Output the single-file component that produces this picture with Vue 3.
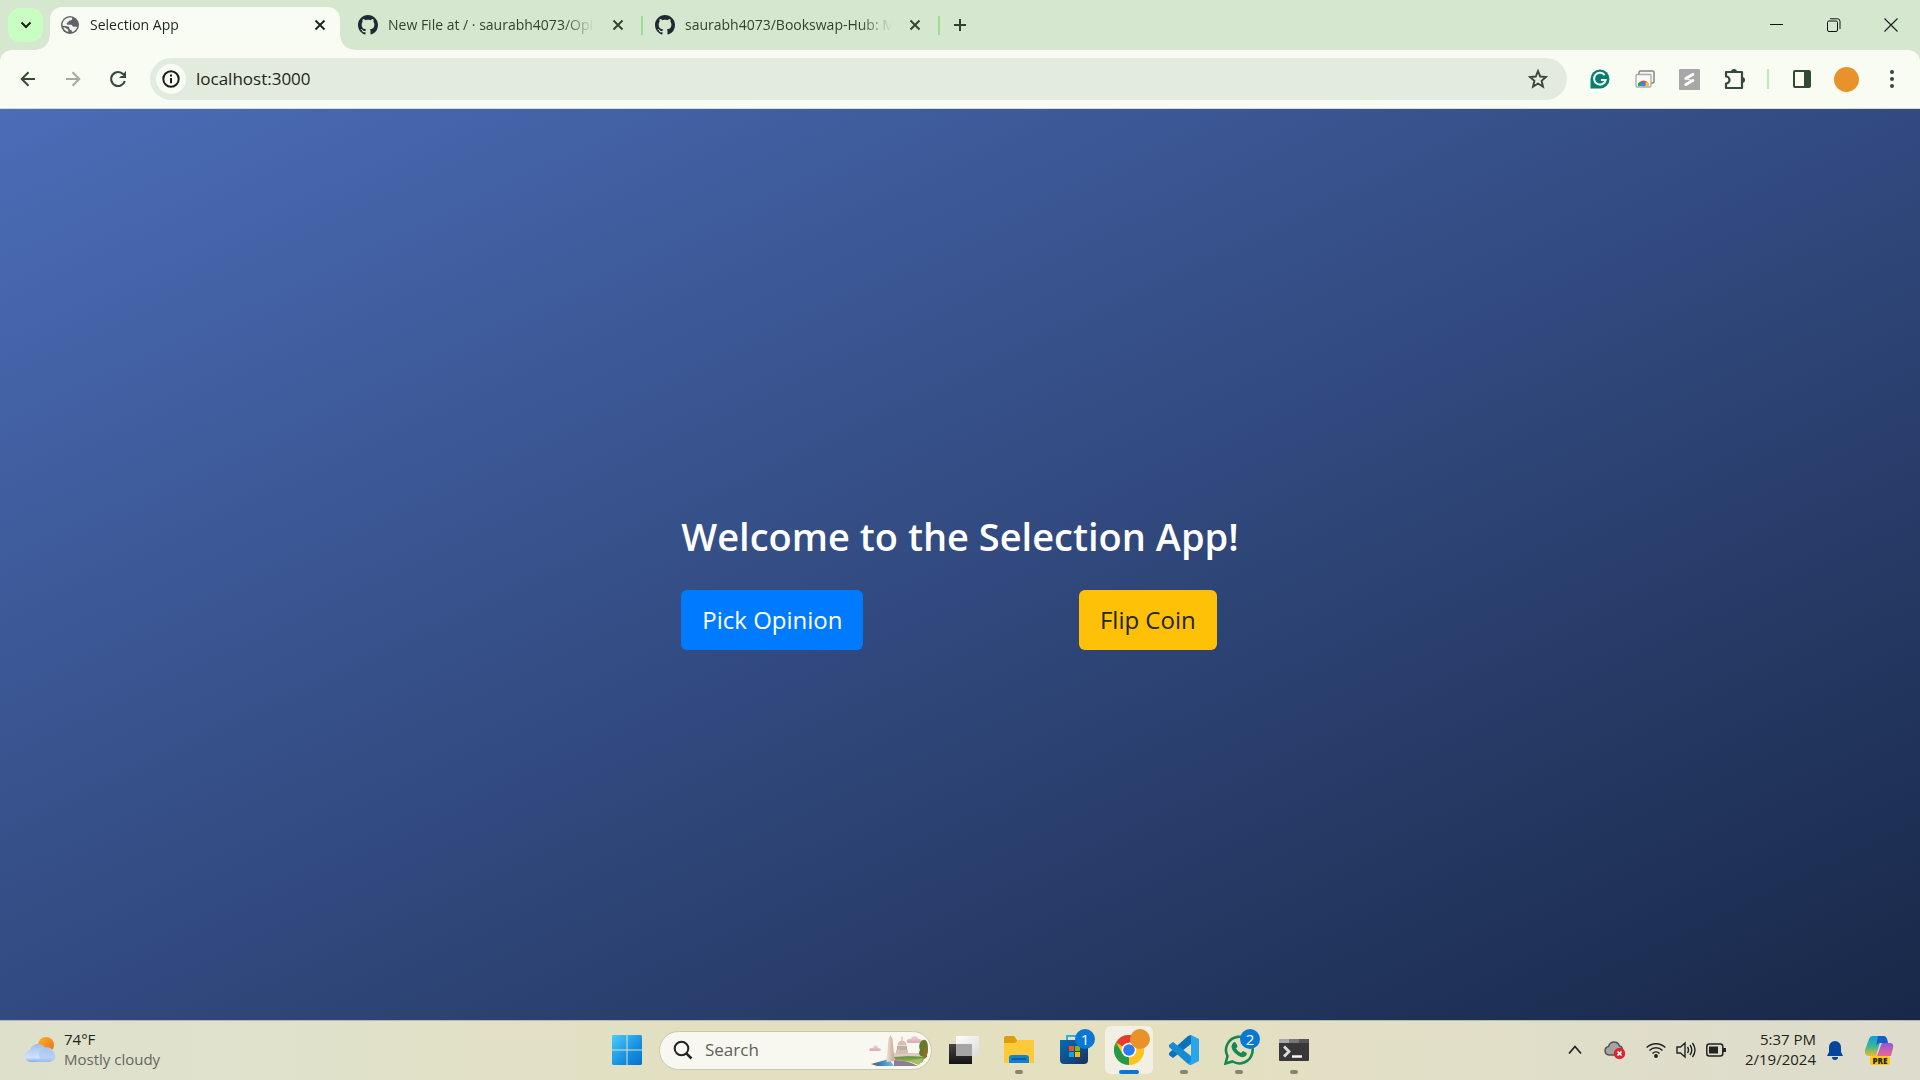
<script setup>
const tabs = [
  { title: 'Selection App', icon: 'globe', active: true },
  { title: 'New File at / · saurabh4073/Opi', icon: 'github', active: false },
  { title: 'saurabh4073/Bookswap-Hub: M', icon: 'github', active: false },
]
</script>

<template>
  <div class="screen">
    <header class="browser">
      <div class="strip">
        <button class="tab-search" aria-label="Search tabs">
          <svg width="12" height="12" viewBox="0 0 12 12"><path d="M1.500 3.500L6 8l4.500-4.500" fill="none" stroke="#14210f" stroke-width="2" /></svg>
        </button>
        <div v-for="tab in tabs" :key="tab.title" class="tab" :class="{ active: tab.active }">
          <svg v-if="tab.icon === 'globe'" class="favicon" viewBox="0 0 20 20">
            <circle cx="10" cy="10" r="9" fill="#5f6368" />
            <path d="M8 2.800c1.500-.5 3-.5 4.300-.1-.3 1.300-.2 2.300-1.300 2.600-1 .2-2.200.2-2.400 1.300-.2 1.200-1.600.9-1.900 1.900-.2 1 .8 1.200 1.800 1.200h2.600c1.200.1 1.200 1.500 2 1.900.9.300 2.500-.1 4.200.2-.7 2.500-2.500 4.500-4.900 5.300-.9-.4-.5-1.600-1.100-2.200-.6-.5-1.800-.2-1.900-1.300-.1-1-.3-2-1.400-2.200-1.500-.3-3.700-.1-5.500-.7C2.100 7 4.500 3.900 8 2.800zM3.200 12.500c1.300-.3 2.600.2 3.300 1 .6.800 1.700.9 1.800 1.900v1.500c-2.400-.5-4.300-2.200-5.100-4.400z" fill="#f1f4ed" />
          </svg>
          <svg v-else class="favicon" viewBox="0 0 16 16"><path fill="#1f2933" d="M8 0C3.580 0 0 3.580 0 8c0 3.540 2.290 6.530 5.470 7.590.4.070.55-.17.55-.38 0-.19-.01-.82-.01-1.490-2.010.37-2.530-.49-2.690-.94-.09-.23-.48-.94-.82-1.130-.28-.15-.68-.52-.01-.53.63-.01 1.080.58 1.230.82.72 1.210 1.870.87 2.330.66.07-.52.28-.87.51-1.070-1.780-.2-3.640-.89-3.640-3.950 0-.87.31-1.590.82-2.150-.08-.2-.36-1.020.08-2.120 0 0 .67-.21 2.200.82.64-.18 1.320-.27 2-.27s1.360.09 2 .27c1.530-1.040 2.200-.82 2.200-.82.44 1.100.16 1.920.08 2.120.51.56.82 1.270.82 2.150 0 3.070-1.870 3.750-3.650 3.950.29.25.54.73.54 1.480 0 1.070-.01 1.930-.01 2.200 0 .21.15.46.55.38A8.010 8.010 0 0 0 16 8c0-4.420-3.580-8-8-8z" /></svg>
          <span class="tab-title">{{ tab.title }}</span>
          <button class="tab-close" aria-label="Close tab">
            <svg width="12" height="12" viewBox="0 0 12 12"><path d="M1.500 1.500l9 9M10.500 1.500l-9 9" stroke="currentColor" stroke-width="1.900" /></svg>
          </button>
        </div>
        <button class="new-tab" aria-label="New tab">
          <svg width="14" height="14" viewBox="0 0 14 14"><path d="M7 1v12M1 7h12" stroke="#2f4128" stroke-width="2" /></svg>
        </button>
        <div class="window-controls">
          <button aria-label="Minimize"><svg width="14" height="14" viewBox="0 0 14 14"><path d="M0 6.500h13" stroke="#111" /></svg></button>
          <button aria-label="Restore"><svg width="14" height="14" viewBox="0 0 14 14" fill="none" stroke="#111"><rect x=".5" y="3" width="10" height="10.500" rx="1.500" /><path d="M3 .8h7.500a2.500 2.500 0 0 1 2.500 2.500V11" /></svg></button>
          <button aria-label="Close"><svg width="14" height="14" viewBox="0 0 14 14"><path d="M.5.5l13 13M13.500.5l-13 13" stroke="#222" stroke-width="1.200" /></svg></button>
        </div>
      </div>

      <div class="toolbar">
        <nav class="history">
          <button aria-label="Back"><svg width="16" height="16" viewBox="0 0 16 16"><path d="M15 8H2M8.500 1.200L1.700 8l6.800 6.800" fill="none" stroke="#364a31" stroke-width="2" /></svg></button>
          <button aria-label="Forward"><svg width="16" height="16" viewBox="0 0 16 16"><path d="M1 8h13M7.500 1.200L14.300 8l-6.800 6.800" fill="none" stroke="#a3aa9f" stroke-width="2" /></svg></button>
          <button aria-label="Reload"><svg width="18" height="18" viewBox="0 0 18 18"><path d="M15.800 11A7 7 0 1 1 14.300 4.300L16 6" fill="none" stroke="#364a31" stroke-width="2.200" /><path d="M17 1v7h-7l2-2h3V3z" fill="#364a31" /></svg></button>
        </nav>
        <div class="omnibox">
          <button class="site-info" aria-label="View site information">
            <svg width="18" height="18" viewBox="0 0 18 18"><circle cx="9" cy="9" r="7.700" fill="none" stroke="#1a1d18" stroke-width="2" /><path d="M9 8v5.200M9 4.600v2" stroke="#1a1d18" stroke-width="2" /></svg>
          </button>
          <input class="address" type="text" value="localhost:3000" aria-label="Address" />
          <button class="star" aria-label="Bookmark this tab">
            <svg width="20" height="20" viewBox="0 0 20 20"><path d="M10 2l2.200 5.500 5.800.5-4.400 3.800 1.400 5.800-5-3.100-5 3.100 1.400-5.800L2 8l5.800-.5z" fill="none" stroke="#3d463a" stroke-width="1.900" /></svg>
          </button>
        </div>
        <div class="extensions">
          <button aria-label="Grammarly"><svg width="20" height="20" viewBox="0 0 20 20"><path d="M.5 19.500V10a9.500 9.500 0 1 1 9.500 9.500z" fill="#087f6d" /><path d="M14.700 6.200A5.900 5.900 0 1 0 15.700 11H11" fill="none" stroke="#fff" stroke-width="2" /></svg></button>
          <button aria-label="Web Store"><svg width="20" height="20" viewBox="0 0 20 20"><rect x="4" y="2" width="15" height="12" rx="1.500" fill="#f6f7f3" stroke="#858585" stroke-width="1.500" /><rect x="1" y="5.500" width="15" height="12.500" rx="1" fill="#fafafa" stroke="#aaa" stroke-width="1.300" /><path d="M3 17a5.500 5.500 0 0 1 11 0z" fill="#df4a3c" /><path d="M3 17v-3l3-1 2.500 4z" fill="#22a45d" /><path d="M14 17v-3l-3-1-2.500 4z" fill="#fbc51b" /><circle cx="8.500" cy="15.200" r="2.300" fill="#3c82ee" /></svg></button>
          <button aria-label="Scribe"><svg width="21" height="21" viewBox="0 0 21 21"><rect width="21" height="21" rx="1" fill="#a7a7a7" /><path d="M6.800 9.500l7-4M6.800 15.500l7-4" stroke="#fff" stroke-width="3" stroke-linecap="round" /><path d="M7 9.500l7 2.500" stroke="#fff" stroke-width="1" /></svg></button>
          <button aria-label="Extensions"><svg width="23" height="23" viewBox="0 0 23 23"><path d="M3 4h16v16H3v-4.500a3.500 3.500 0 0 0 0-7z" fill="none" stroke="#364a31" stroke-width="2.200" stroke-linejoin="round" /><path d="M8 4a3 3 0 0 1 6 0zM19 9a3 3 0 0 1 0 6z" fill="#364a31" /></svg></button>
          <i class="divider"></i>
          <button aria-label="Side panel"><svg width="18" height="18" viewBox="0 0 18 18"><rect x="1" y="1" width="16" height="16" rx="1" fill="none" stroke="#364a31" stroke-width="2" /><path d="M11 1h6v16h-6z" fill="#364a31" /></svg></button>
          <button aria-label="Profile"><span class="avatar"></span></button>
          <button aria-label="Menu"><svg width="4" height="18" viewBox="0 0 4 18" fill="#364a31"><circle cx="2" cy="2" r="2" /><circle cx="2" cy="9" r="2" /><circle cx="2" cy="16" r="2" /></svg></button>
        </div>
      </div>
    </header>

    <main class="page">
      <div class="welcome">
        <h1>Welcome to the Selection App!</h1>
        <div class="choices">
          <button class="btn primary">Pick Opinion</button>
          <button class="btn warning">Flip Coin</button>
        </div>
      </div>
    </main>

    <footer class="taskbar">
      <button class="weather">
        <svg width="32" height="28" viewBox="0 0 32 28">
          <defs>
            <linearGradient id="sun" x1="0" y1="0" x2="1" y2="1"><stop offset="0" stop-color="#f4b62a" /><stop offset="1" stop-color="#f26a10" /></linearGradient>
            <linearGradient id="cloud" x1="0" y1="0" x2="0" y2="1"><stop offset="0" stop-color="#9fbdf2" /><stop offset=".75" stop-color="#d3e2fb" /><stop offset="1" stop-color="#86a8ea" /></linearGradient>
          </defs>
          <circle cx="22" cy="9" r="8" fill="url(#sun)" />
          <path d="M7 26a6 6 0 0 1-1-12A8.500 8.500 0 0 1 21 11.500 7.300 7.300 0 0 1 25 26z" fill="url(#cloud)" />
          <path d="M15 17a7.500 7.500 0 0 1 14-1 5.500 5.500 0 0 1-3 10H10c8-1 5-6 5-9z" fill="#a9c4f3" opacity=".65" />
        </svg>
        <span class="weather-text"><span>74°F</span><span class="muted">Mostly cloudy</span></span>
      </button>

      <div class="apps">
        <button class="app start" aria-label="Start">
          <svg width="30" height="30" viewBox="0 0 30 30">
            <defs><linearGradient id="win" x1="0" y1="0" x2="1" y2="1"><stop offset="0" stop-color="#4ccdfb" /><stop offset=".6" stop-color="#148fe0" /><stop offset="1" stop-color="#0572cf" /></linearGradient></defs>
            <path d="M1 0h13.500v14.500H0V1zM15.500 0H29l1 1v13.500H15.500zM0 15.500h14.500V30H1l-1-1zM15.500 15.500H30V29l-1 1H15.500z" fill="url(#win)" />
          </svg>
        </button>
        <label class="search">
          <svg width="20" height="20" viewBox="0 0 20 20"><circle cx="8.500" cy="8.500" r="6.800" fill="none" stroke="#222" stroke-width="2" /><path d="M13.300 13.300l5.200 5.200" stroke="#222" stroke-width="2.500" /></svg>
          <input type="text" placeholder="Search" aria-label="Search" />
          <svg class="scene" width="60" height="34" viewBox="0 0 60 34">
            <defs>
              <linearGradient id="lawn" x1="0" y1="0" x2="0" y2="1"><stop offset="0" stop-color="#5f8c35" /><stop offset="1" stop-color="#a9c266" /></linearGradient>
              <linearGradient id="stone" x1="0" y1="0" x2="1" y2="0"><stop offset="0" stop-color="#efe0d2" /><stop offset="1" stop-color="#c4a796" /></linearGradient>
              <linearGradient id="puff" x1="0" y1="0" x2="0" y2="1"><stop offset="0" stop-color="#ecd5d8" /><stop offset="1" stop-color="#d9aab6" /></linearGradient>
              <linearGradient id="pool" x1="0" y1="0" x2="1" y2="0"><stop offset="0" stop-color="#7b5f63" /><stop offset=".4" stop-color="#3d80b4" /><stop offset="1" stop-color="#6fc4ea" /></linearGradient>
            </defs>
            <path d="M24 20h30v5H24z" fill="#dccdbf" />
            <path d="M27 17h12v4H27zM28 13h10v4H28zM28.500 12.500a4.500 5 0 0 1 9 0zM32.400 3.500h1.200v5h-1.200z" fill="#d2c0b5" />
            <path d="M29 13v4m2-4v4m2-4v4m2-4v4m2-4v4" stroke="#a28f86" stroke-width=".7" />
            <path d="M25 24c12-1 22-1 31 0l-3 6-27-3z" fill="url(#lawn)" />
            <path d="M25 27c9 0 17 2 24 6H25z" fill="#8f7c92" />
            <path d="M38 28l16-3-4 7z" fill="#a4bd62" />
            <path d="M2 31l18-5 5 7H8z" fill="url(#pool)" />
            <path d="M19.500 6L21.500 2l2 4 2 22-8 1z" fill="url(#stone)" />
            <path d="M1 18c-2-2 1-4 3-3 1-4 5-3 5 0 3 0 4 3 1 3z" fill="url(#puff)" />
            <path d="M39 10c-3-2 0-5 3-4 1-4 7-4 7 0 4-1 5 4 2 4z" fill="url(#puff)" />
            <path d="M54 7c4-1 5 4 5 8s0 7-3 9c-6 0-7-4-5-7-2-4 0-9 3-10z" fill="#66792a" />
            <path d="M55 26v-9l3-5v12z" fill="#9b6b24" />
          </svg>
        </label>
        <button class="app" aria-label="Task view">
          <svg width="30" height="30" viewBox="0 0 30 30">
            <defs>
              <linearGradient id="back" x1="0" y1="0" x2="0" y2="1"><stop offset="0" stop-color="#444" /><stop offset="1" stop-color="#151515" /></linearGradient>
              <linearGradient id="front" x1="0" y1="0" x2="1" y2="1"><stop offset="0" stop-color="#fdfdfd" /><stop offset="1" stop-color="#dcdcdc" /></linearGradient>
            </defs>
            <path d="M0 9h23v20H0z" fill="url(#back)" /><path d="M7 1h23v20H7z" fill="url(#front)" /><path d="M7 9h16v12H7z" fill="#a6a6a6" />
          </svg>
        </button>
        <button class="app running" aria-label="File Explorer">
          <svg width="32" height="30" viewBox="0 0 32 30"><path d="M1 3q0-2 2-2h8l3 4v6H1z" fill="#dd9d10" /><path d="M1 8h11l3-3h16v23H1z" fill="#ffc937" /><path d="M6 28v-5q0-3 3-3h14q3 0 3 3v5z" fill="#1181d4" /><path d="M9 24h14" stroke="#075696" stroke-width="1.500" /></svg>
        </button>
        <button class="app" aria-label="Microsoft Store">
          <svg width="30" height="30" viewBox="0 0 30 30"><defs><linearGradient id="store" x1="0" y1="0" x2="1" y2="1"><stop offset="0" stop-color="#086bb8" /><stop offset="1" stop-color="#1c3159" /></linearGradient></defs><path d="M8 6V1h13v5" fill="none" stroke="#27b5e9" stroke-width="2" /><path d="M1 5h28v20q0 4-4 4H5q-4 0-4-4z" fill="url(#store)" /><path d="M10 11h5v5h-5z" fill="#f25022" /><path d="M16 11h5v5h-5z" fill="#7fba00" /><path d="M10 17h5v5h-5z" fill="#00a4ef" /><path d="M16 17h5v5h-5z" fill="#ffb900" /></svg>
          <span class="badge">1</span>
        </button>
        <button class="app current" aria-label="Google Chrome">
          <svg width="30" height="30" viewBox="0 0 30 30"><circle cx="15" cy="15" r="15" fill="#fbc51d" /><path d="M15 15L2 7.500A15 15 0 0 1 28 7.500H15z" fill="#e33b2e" /><path d="M2 7.500L8.500 18.800 15 22.500 15 30A15 15 0 0 1 2 7.500z" fill="#259b4a" /><path d="M21.500 18.800L15 30A15 15 0 0 0 28 7.500H15z" fill="#fbc51d" /><circle cx="15" cy="15" r="7.300" fill="#fff" /><circle cx="15" cy="15" r="5.800" fill="#2b7ceb" /></svg>
          <span class="badge profile"></span>
        </button>
        <button class="app running" aria-label="Visual Studio Code">
          <svg width="30" height="30" viewBox="0 0 30 30"><path d="M22 0v9L4 23l-4-3v-2L19 1z" fill="#0873bb" /><path d="M22 30v-9L4 7 0 10v2l19 17z" fill="#168bd3" /><path d="M22 0l8 4v22l-8 4-3-1q2-1 3-3z" fill="#28a7ee" /></svg>
        </button>
        <button class="app running" aria-label="WhatsApp">
          <svg width="30" height="30" viewBox="0 0 30 30"><path d="M1.500 28.500l2-7.300A13.300 13.300 0 1 1 8.500 26.500z" fill="none" stroke="#178754" stroke-width="2.600" /><path d="M9 8q2-2 3 0l1.500 3q0 1-1.500 2.500 2 3.500 5 4.500l2-2 3.500 1.700q1 1-.5 3-3 3-8-.2-6-4-6.500-8.500Q7.500 9.500 9 8z" fill="#178754" /></svg>
          <span class="badge">2</span>
        </button>
        <button class="app running" aria-label="Terminal">
          <svg width="30" height="24" viewBox="0 0 30 24"><rect y="1" width="30" height="22" rx="1" fill="#383838" /><path d="M0 1h10v4H0z" fill="#a8a8a8" /><path d="M10 1h10v4H10z" fill="#777" /><path d="M20 1h10v4H20z" fill="#555" /><path d="M5 8.500l5 5-5 5" fill="none" stroke="#ddd" stroke-width="2.800" /><path d="M13 18.500h10" stroke="#f5f5f5" stroke-width="2.500" /></svg>
        </button>
      </div>

      <div class="tray">
        <button class="chevron" aria-label="Show hidden icons"><svg width="14" height="10" viewBox="0 0 14 10"><path d="M1 8.500l6-7 6 7" fill="none" stroke="#222" stroke-width="1.700" /></svg></button>
        <button class="cloud" aria-label="OneDrive"><svg width="22" height="20" viewBox="0 0 22 20"><path d="M5 15a4.300 4.300 0 0 1-.5-8.500Q6 2 10 2q4 0 5.500 4 3 .5 3 4.500 0 4-4 4.500z" fill="#a4a4a4" stroke="#555" stroke-width="1.500" /><circle cx="15.500" cy="13.500" r="5.700" fill="#da2730" /><path d="M13.500 11.500l4 4m0-4l-4 4" stroke="#fff" stroke-width="1.700" /></svg></button>
        <button class="status" aria-label="Network, volume and battery">
          <svg width="20" height="18" viewBox="0 0 20 18" fill="none" stroke="#222" stroke-width="1.500"><path d="M.7 6.500a13.200 13.200 0 0 1 18.600 0M3.500 9.500a9.200 9.200 0 0 1 13 0M6.500 12.500a5 5 0 0 1 7 0" /><circle cx="10" cy="15" r="1.200" fill="#222" /></svg>
          <svg width="20" height="18" viewBox="0 0 20 18" fill="none" stroke="#222" stroke-width="1.400"><path d="M1 6h3.500L9 2v14l-4.500-4H1zM11.500 6q2 3 0 6M14 4q3.500 5 0 10M16.500 2q5 7 0 14" /></svg>
          <svg width="20" height="14" viewBox="0 0 20 14"><rect x=".8" y="1" width="16" height="12" rx="2.500" fill="none" stroke="#222" stroke-width="1.500" /><path d="M3 3.500h9v7H3z" fill="#222" /><path d="M17 5h3v4h-3z" fill="#222" /></svg>
        </button>
        <button class="clock"><span>5:37 PM</span><span>2/19/2024</span></button>
        <button class="bell" aria-label="Notifications"><svg width="16" height="20" viewBox="0 0 16 20"><path d="M2 7a6 6 0 0 1 12 0v5l2 4H0l2-4zM5 17h6a3 3 0 0 1-6 0z" fill="#05469b" /></svg></button>
        <button class="copilot" aria-label="Copilot preview">
          <svg width="30" height="20" viewBox="0 0 30 20">
            <defs>
              <linearGradient id="cpl" x1="0" y1="0" x2="0" y2="1"><stop offset="0" stop-color="#159bd9" /><stop offset=".5" stop-color="#3bb49a" /><stop offset="1" stop-color="#e5bd25" /></linearGradient>
              <linearGradient id="cpr" x1="0" y1="0" x2="0" y2="1"><stop offset="0" stop-color="#9456dd" /><stop offset="1" stop-color="#ed668c" /></linearGradient>
            </defs>
            <path d="M8 0h9l-6 20H3q-4-1-3-6L4 3q1-3 4-3z" fill="url(#cpl)" />
            <path d="M13 0h6q3 0 4 7h-8q-3 0-4 4z" fill="#145fc7" />
            <path d="M18 7h8q3 1 2 5l-2 8H12l4-11q0-2 2-2z" fill="url(#cpr)" />
          </svg>
          <span class="pre">PRE</span>
        </button>
      </div>
    </footer>
  </div>
</template>

<style>
body { margin: 0; }
</style>

<style scoped>
.screen {
  display: flex;
  flex-direction: column;
  min-height: 100vh;
  font-family: "Open Sans", "Noto Sans", sans-serif;
  color: #1c2619;
}
button, input {
  font: inherit;
  color: inherit;
  border: 0;
  padding: 0;
  margin: 0;
  background: none;
}
button {
  display: flex;
  align-items: center;
  justify-content: center;
}
svg { flex: none; display: block; }

.browser { background: #d5e7cf; }
.strip {
  display: flex;
  height: 50px;
  padding-left: 8px;
}
.tab-search {
  width: 35px;
  height: 34px;
  margin: 8px 7px 0 0;
  border-radius: 12px;
  background: #c9fec2;
}
.tab {
  position: relative;
  box-sizing: border-box;
  display: flex;
  align-items: center;
  width: 297px;
  height: 43px;
  margin-top: 7px;
  padding: 0 16px 7px 12px;
  font-size: 14px;
  line-height: 20px;
  color: #33442e;
}
.tab.active {
  width: 290px;
  margin-right: 6px;
  padding-left: 10px;
  padding-right: 11px;
  border-radius: 12px 12px 0 0;
  background: #f8fcf2;
  color: #1c2619;
}
.tab.active::before, .tab.active::after {
  content: "";
  position: absolute;
  bottom: 0;
  width: 14px;
  height: 14px;
}
.tab.active::before { right: 100%; background: radial-gradient(circle at 0 0, transparent 13px, #f8fcf2 14px); }
.tab.active::after { left: 100%; background: radial-gradient(circle at 100% 0, transparent 13px, #f8fcf2 14px); }
.tab:not(.active)::after {
  content: "";
  position: absolute;
  right: 0;
  top: 9px;
  width: 2px;
  height: 19px;
  background: #9edb94;
}
.favicon { width: 20px; height: 20px; }
.tab-title {
  flex: 1;
  min-width: 0;
  margin: 0 10px;
  white-space: nowrap;
  mask-image: linear-gradient(to right, #000 calc(100% - 36px), transparent calc(100% - 4px));
}
.tab-close { width: 18px; height: 18px; }
.new-tab { width: 40px; height: 50px; }
.window-controls { display: flex; margin-left: auto; padding-right: 1px; }
.window-controls button { width: 57px; height: 50px; }

.toolbar {
  display: flex;
  align-items: center;
  height: 58px;
  border-bottom: 1px solid #d5e0d0;
  border-radius: 12px 12px 0 0;
  background: #f8fcf2;
}
.history { display: flex; padding-left: 5px; }
.history button { width: 45px; height: 42px; }
.omnibox {
  display: flex;
  flex: 1;
  align-items: center;
  box-sizing: border-box;
  height: 42px;
  margin-left: 10px;
  padding: 0 19px 0 6px;
  border-radius: 21px;
  background: #e3ebdf;
}
.site-info {
  width: 30px;
  height: 30px;
  border-radius: 50%;
  background: #f8fcf2;
}
.address {
  flex: 1;
  min-width: 0;
  margin-left: 10px;
  font-size: 17px;
  line-height: 24px;
}
.extensions { display: flex; align-items: center; padding-left: 10px; padding-right: 6px; }
.extensions button { width: 45px; height: 42px; }
.divider { width: 2px; height: 20px; margin: 0 10px; background: #b5eeb0; }
.avatar { width: 25px; height: 25px; border-radius: 50%; background: #e9922b; }

.page {
  display: flex;
  flex: 1;
  align-items: center;
  justify-content: center;
  background: linear-gradient(to bottom right, #4b6cb7, #182848);
}
.welcome { padding-top: 36px; color: #fff; }
h1 {
  margin: 0 0 28px;
  font-size: 38px;
  line-height: 48px;
  font-weight: 600;
}
.choices {
  display: flex;
  justify-content: space-between;
  padding: 2px 22px 4px 0;
}
.btn {
  height: 60px;
  padding: 0 21px;
  border-radius: 6px;
  font-size: 24px;
  line-height: 36px;
}
.primary { background: #007bff; color: #fff; }
.warning { background: #ffc107; color: #212529; }

.taskbar {
  display: grid;
  grid-template-columns: 1fr auto 1fr;
  align-items: center;
  box-sizing: border-box;
  height: 60px;
  padding-bottom: 1px;
  border-top: 1px solid #b6b6ac;
  background: linear-gradient(90deg, #dfe0cb, #e0e2cd 12%, #e2e0c1 35%, #e4e0c0 60%, #dfdec9 82%, #dedccd);
  font-size: 15px;
  line-height: 20px;
}
.weather { justify-self: start; gap: 8px; padding-left: 24px; }
.weather-text {
  display: flex;
  flex-direction: column;
  align-items: flex-start;
  padding-bottom: 3px;
}
.muted { color: #66665c; }
.apps { display: flex; align-items: center; }
.app {
  position: relative;
  width: 48px;
  height: 48px;
  margin: 0 3px 0 4px;
  border-radius: 6px;
}
.start { margin-right: 8px; }
.search {
  display: flex;
  align-items: center;
  box-sizing: border-box;
  width: 273px;
  height: 39px;
  margin-right: 4px;
  padding: 0 2px 0 13px;
  border: 1px solid #c9c8b2;
  border-radius: 20px;
  background: #f8f7f0;
}
.search input {
  flex: 1;
  min-width: 0;
  margin-left: 12px;
  font-size: 17px;
  line-height: 24px;
}
.search input::placeholder { color: #60605a; opacity: 1; }
.running::after, .current::after {
  content: "";
  position: absolute;
  left: 50%;
  bottom: 0;
  width: 8px;
  height: 4px;
  border-radius: 2px;
  background: #858371;
  transform: translateX(-50%);
}
.current { background: #f2f0e4; }
.current::after { width: 20px; background: #0878d4; }
.badge {
  position: absolute;
  top: 3px;
  right: 3px;
  width: 20px;
  height: 20px;
  border-radius: 50%;
  background: #0878d4;
  color: #fff;
  font-size: 15px;
  line-height: 20px;
}
.profile { background: #e9922b; }
.tray { display: flex; align-items: center; justify-self: end; padding-right: 25px; }
.cloud { margin-left: 22px; }
.status { gap: 10px; margin-left: 20px; }
.clock {
  flex-direction: column;
  align-items: flex-end;
  margin-left: 19px;
  padding-bottom: 3px;
}
.bell { margin-left: 11px; }
.copilot { flex-direction: column; margin-left: 22px; }
.pre {
  padding: 0 3px;
  border-radius: 2px;
  background: #ffc90e;
  font-size: 8px;
  line-height: 9px;
  font-weight: 800;
}
</style>
